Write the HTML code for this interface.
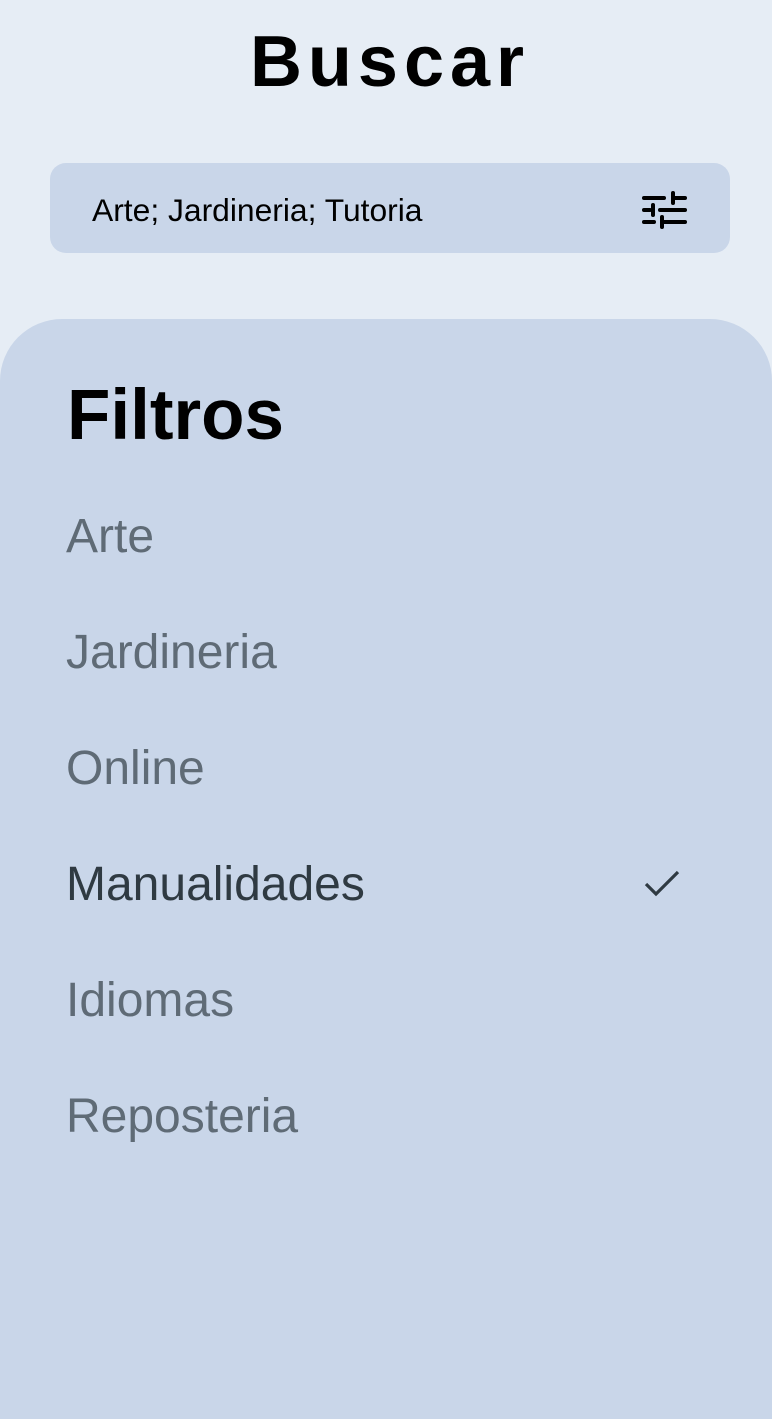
<!DOCTYPE html>
<html><head><meta charset="utf-8"><style>
html,body{margin:0;padding:0;}
body{width:772px;height:1390px;background:#e6edf5;position:relative;overflow:hidden;font-family:"Liberation Sans",sans-serif;}
.title{position:absolute;top:22px;left:4px;width:772px;text-align:center;font-weight:bold;font-size:72px;letter-spacing:6px;line-height:80px;color:#000;}
.search{position:absolute;left:50px;top:163px;width:680px;height:90px;background:#c9d6e9;border-radius:16px;}
.search span{position:absolute;left:42px;top:0;line-height:94px;font-size:31.8px;color:#000;}
.search svg{position:absolute;left:590px;top:28px;}
.panel{position:absolute;left:0;top:319px;width:772px;height:1100px;background:#c9d6e9;border-radius:62px 62px 0 0;}
.h{position:absolute;left:67px;top:376px;font-size:71px;font-weight:bold;line-height:80px;color:#000;}
.item{position:absolute;left:66px;font-size:48px;line-height:60px;color:#5f6b76;}
.sel{color:#2f3a42;}
</style></head><body>
<div class="title">Buscar</div>
<div class="search"><span>Arte; Jardineria; Tutoria</span>
<svg width="50" height="40" viewBox="0 0 50 40"><g stroke="#000" stroke-width="4" stroke-linecap="round">
<line x1="4" y1="7" x2="24" y2="7"/><line x1="34" y1="7" x2="45" y2="7"/><line x1="33" y1="2" x2="33" y2="12"/>
<line x1="4" y1="19" x2="10" y2="19"/><line x1="20" y1="19" x2="45" y2="19"/><line x1="13" y1="14" x2="13" y2="24"/>
<line x1="4" y1="31" x2="14" y2="31"/><line x1="24" y1="31" x2="45" y2="31"/><line x1="22" y1="26" x2="22" y2="36"/>
</g></svg></div>
<div class="panel"></div>
<div class="h">Filtros</div>
<div class="item" style="top:507px">Arte</div>
<div class="item" style="top:623px">Jardineria</div>
<div class="item" style="top:739px">Online</div>
<div class="item sel" style="top:855px">Manualidades</div>
<svg style="position:absolute;left:642px;top:867px" width="40" height="34" viewBox="0 0 40 34"><path d="M4 17 L14 27 L36 5" fill="none" stroke="#2f3a42" stroke-width="3.2"/></svg>
<div class="item" style="top:971px">Idiomas</div>
<div class="item" style="top:1087px">Reposteria</div>
</body></html>
